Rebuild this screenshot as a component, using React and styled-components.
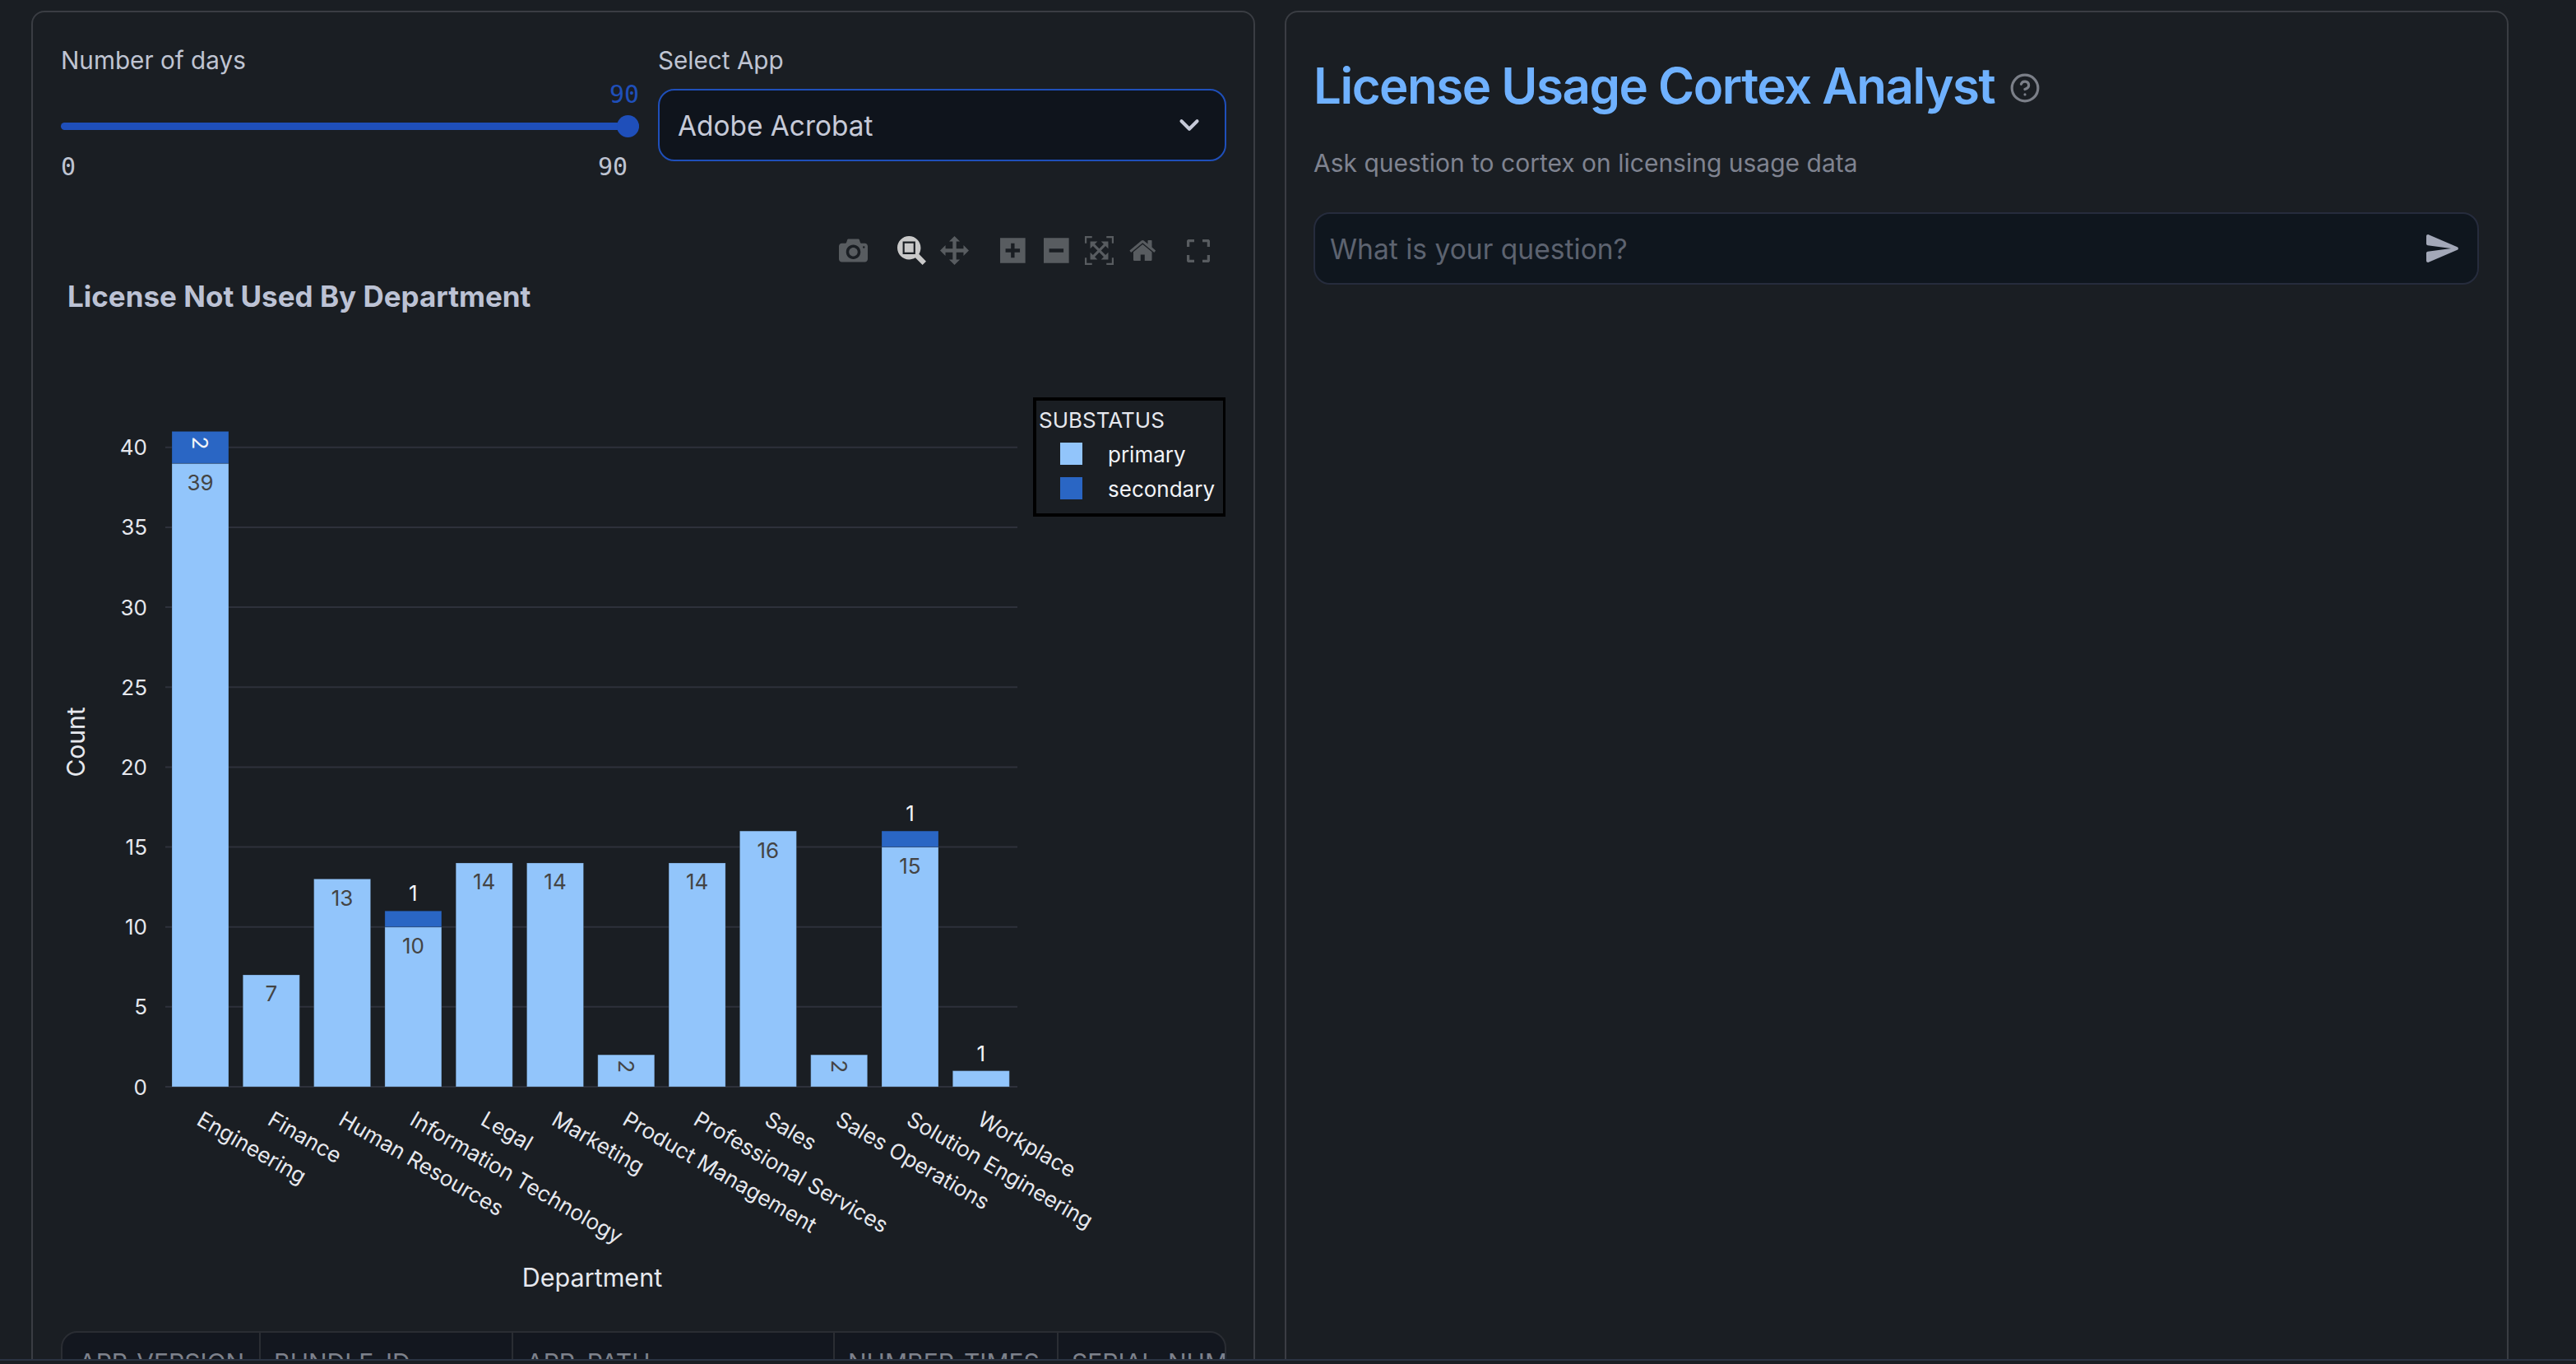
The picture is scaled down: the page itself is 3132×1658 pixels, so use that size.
import React from 'react';
import styled, { createGlobalStyle } from 'styled-components';
import { ChevronDown, CircleHelp } from 'lucide-react';

const departments = [
  { name: 'Engineering', primary: 39, secondary: 2 },
  { name: 'Finance', primary: 7 },
  { name: 'Human Resources', primary: 13 },
  { name: 'Information Technology', primary: 10, secondary: 1 },
  { name: 'Legal', primary: 14 },
  { name: 'Marketing', primary: 14 },
  { name: 'Product Management', primary: 2 },
  { name: 'Professional Services', primary: 14 },
  { name: 'Sales', primary: 16 },
  { name: 'Sales Operations', primary: 2 },
  { name: 'Solution Engineering', primary: 15, secondary: 1 },
  { name: 'Workplace', primary: 1 },
];

const columns = [
  { label: 'APP_VERSION', width: 241 },
  { label: 'BUNDLE_ID', width: 307 },
  { label: 'APP_PATH', width: 391 },
  { label: 'NUMBER_TIMES', width: 272 },
  { label: 'SERIAL_NUMBER', width: 260 },
];

const modeIcons = [
  {
    name: 'camera',
    width: 1000,
    gap: 36,
    d: 'm500 450c-83 0-150-67-150-150 0-83 67-150 150-150 83 0 150 67 150 150 0 83-67 150-150 150z m400 150h-120c-16 0-34 13-39 29l-31 93c-6 15-23 28-40 28h-340c-16 0-34-13-39-28l-31-94c-6-15-23-28-40-28h-120c-55 0-100-45-100-100v-450c0-55 45-100 100-100h800c55 0 100 45 100 100v450c0 55-45 100-100 100z m-400-550c-138 0-250 112-250 250 0 138 112 250 250 250 138 0 250-112 250-250 0-138-112-250-250-250z m365 380c-19 0-35 16-35 35 0 19 16 35 35 35 19 0 35-16 35-35 0-19-16-35-35-35z',
  },
  {
    name: 'zoom',
    width: 1000,
    gap: 17,
    active: true,
    d: 'm1000-25l-250 251c40 63 63 138 63 218 0 224-182 406-407 406-224 0-406-182-406-406s183-406 407-406c80 0 155 22 218 62l250-250 125 125z m-812 250l0 438 437 0 0-438-437 0z m62 375l313 0 0-312-313 0 0 312z',
  },
  {
    name: 'pan',
    width: 1000,
    gap: 38,
    d: 'm1000 350l-187 188 0-125-250 0 0 250 125 0-188 187-187-187 125 0 0-250-250 0 0 125-188-188 186-187 0 125 252 0 0-250-125 0 187-188 188 188-125 0 0 250 250 0 0-126 187 188z',
  },
  {
    name: 'plus',
    width: 875,
    gap: 22,
    d: 'm1 787l0-875 875 0 0 875-875 0z m687-500l-187 0 0-187-125 0 0 187-188 0 0 125 188 0 0 187 125 0 0-187 187 0 0-125z',
  },
  {
    name: 'minus',
    width: 875,
    gap: 19,
    d: 'm0 788l0-876 875 0 0 876-875 0z m688-500l-500 0 0 125 500 0 0-125z',
  },
  {
    name: 'autoscale',
    width: 1000,
    gap: 19,
    d: 'm250 850l-187 0-63 0 0-62 0-188 63 0 0 188 187 0 0 62z m688 0l-188 0 0-62 188 0 0-188 62 0 0 188 0 62-62 0z m-875-938l0 188-63 0 0-188 0-62 63 0 187 0 0 62-187 0z m875 188l0-188-188 0 0-62 188 0 62 0 0 62 0 188-62 0z m-125 188l-1 0-93-94-156 156 156 156 92-93 2 0 0 250-250 0 0-2 93-92-156-156-156 156 94 92 0 2-250 0 0-250 0 0 93 93 157-156-157-156-93 94 0 0 0-250 250 0 0 0-94 93 156 157 156-157-93-93 0 0 250 0 0 250z',
  },
  {
    name: 'home',
    width: 928.6,
    gap: 38,
    d: 'm786 296v-267q0-15-11-26t-25-10h-214v214h-143v-214h-214q-15 0-25 10t-11 26v267q0 1 0 2t0 2l321 264 321-264q1-1 1-4z m124 39l-34-41q-5-5-12-6h-2q-7 0-12 3l-386 322-386-322q-7-4-13-4-7 2-12 7l-35 41q-4 5-3 13t6 12l401 334q18 15 42 15t43-15l136-114v109q0 8 5 13t13 5h107q8 0 13-5t5-13v-227l122-102q5-5 6-12t-4-13z',
  },
];

const zeroY = 1321;
const unitY = 19.43;
const barLeft = 209;
const barStep = 86.3;
const barWidth = 69;

function BarLabel({ x, y, value, dark }) {
  const rotated = value === 2;
  return (
    <ChartText
      x={x}
      y={y}
      $size={26}
      $color={dark ? '#444444' : '#f2f4f8'}
      textAnchor="middle"
      dominantBaseline="central"
      transform={rotated ? `rotate(90 ${x} ${y})` : undefined}
    >
      {value}
    </ChartText>
  );
}

function DepartmentBar({ item, index }) {
  const { name, primary, secondary } = item;
  const x = barLeft + index * barStep;
  const cx = x + barWidth / 2;
  const primaryTop = zeroY - primary * unitY;
  const secondaryTop = secondary ? primaryTop - secondary * unitY : 0;
  const primaryLabelY =
    primary === 1 ? primaryTop - 21 : primaryTop + (primary === 2 ? 14 : 23);
  const labelX = x + barWidth / 2 - 6;

  return (
    <g>
      <BarRect x={x} y={primaryTop} width={barWidth} height={primary * unitY} fill="#92c5fb" />
      <BarLabel x={cx} y={primaryLabelY} value={primary} dark={primary !== 1} />
      {secondary && (
        <>
          <BarRect x={x} y={secondaryTop} width={barWidth} height={secondary * unitY} fill="#2a66c4" />
          <BarLabel
            x={cx}
            y={secondary === 1 ? secondaryTop - 22 : secondaryTop + 14}
            value={secondary}
          />
        </>
      )}
      <ChartText
        x={labelX}
        y={1366}
        $size={26.2}
        $color="#e6e8ee"
        transform={`rotate(30 ${labelX} 1366)`}
      >
        {name}
      </ChartText>
    </g>
  );
}

function LicenseChart() {
  const ticks = [0, 5, 10, 15, 20, 25, 30, 35, 40];
  return (
    <ChartSvg viewBox="74 270 1416 1340">
      <ChartText x={82} y={373} $size={35} $weight={700} $color="#bcc2d4">
        License Not Used By Department
      </ChartText>
      {ticks.map((tick) => (
        <g key={tick}>
          <line x1={201} x2={1237} y1={zeroY - tick * unitY} y2={zeroY - tick * unitY} stroke="#2e313b" strokeWidth="2" />
          <ChartText x={179} y={zeroY - tick * unitY} $size={26} $color="#e6e8ee" textAnchor="end" dominantBaseline="central">
            {tick}
          </ChartText>
        </g>
      ))}
      {departments.map((item, index) => (
        <DepartmentBar key={item.name} item={item} index={index} />
      ))}
      <ChartText x={92} y={902} $size={30} $color="#e6e8ee" textAnchor="middle" dominantBaseline="central" transform="rotate(-90 92 902)">
        Count
      </ChartText>
      <ChartText x={720} y={1552} $size={30.5} $color="#e6e8ee" textAnchor="middle" dominantBaseline="central">
        Department
      </ChartText>

      <rect x={1258} y={485} width={231} height={141} fill="#1a1e23" stroke="#000000" strokeWidth="4" />
      <ChartText x={1263} y={510} $size={26} $color="#e6e8ee" dominantBaseline="central">
        SUBSTATUS
      </ChartText>
      <rect x={1289} y={538} width={27} height={27} fill="#92c5fb" />
      <ChartText x={1347} y={552} $size={26} $color="#f2f4f8" dominantBaseline="central">
        primary
      </ChartText>
      <rect x={1289} y={580} width={27} height={27} fill="#2a66c4" />
      <ChartText x={1347} y={594} $size={26} $color="#f2f4f8" dominantBaseline="central">
        secondary
      </ChartText>
    </ChartSvg>
  );
}

function ModeBar() {
  return (
    <ModeBarWrap>
      {modeIcons.map((icon) => (
        <ModeIcon
          key={icon.name}
          $gap={icon.gap}
          $active={icon.active}
          viewBox={`0 0 ${icon.width} 1000`}
        >
          <g transform="matrix(1 0 0 -1 0 850)">
            <path d={icon.d} />
          </g>
        </ModeIcon>
      ))}
      <FullscreenIcon viewBox="0 0 28 28">
        <path d="M1.5 9V3a1.500 1.500 0 0 1 1.500-1.500H9M19 1.500h6A1.500 1.500 0 0 1 26.500 3v6M26.500 19v6a1.500 1.500 0 0 1-1.500 1.500h-6M9 26.500H3A1.500 1.500 0 0 1 1.500 25v-6" />
      </FullscreenIcon>
    </ModeBarWrap>
  );
}

export default function App() {
  return (
    <>
      <GlobalStyle />
      <Page>
        <Panels>
          <LeftPanel>
            <Controls>
              <div>
                <FieldLabel>Number of days</FieldLabel>
                <SliderValue>90</SliderValue>
                <SliderTrack>
                  <SliderThumb />
                </SliderTrack>
                <SliderRange>
                  <span>0</span>
                  <span>90</span>
                </SliderRange>
              </div>
              <div>
                <FieldLabel>Select App</FieldLabel>
                <SelectBox>
                  <SelectValue>Adobe Acrobat</SelectValue>
                  <ChevronDown size={38} strokeWidth={2.6} color="#c6cad8" />
                </SelectBox>
              </div>
            </Controls>
            <ChartBox>
              <ModeBar />
              <LicenseChart />
            </ChartBox>
            <DataTable>
              {columns.map((col, index) => (
                <HeaderCell key={col.label} $width={col.width} $first={index === 0}>
                  {col.label}
                </HeaderCell>
              ))}
            </DataTable>
          </LeftPanel>
          <RightPanel>
            <TitleRow>
              <Title>License Usage Cortex Analyst</Title>
              <HelpIcon size={38} strokeWidth={2} color="#7b7f88" />
            </TitleRow>
            <Subtitle>Ask question to cortex on licensing usage data</Subtitle>
            <QuestionBox>
              <Placeholder>What is your question?</Placeholder>
              <SendIcon viewBox="0 0 24 24">
                <path d="M3.400 20.400 20.850 12.920c.81-.35.81-1.490 0-1.840L3.400 3.600c-.66-.29-1.390.2-1.390.91L2 9.120c0 .5.37.93.87.99L17 12 2.870 13.880c-.5.07-.87.5-.87 1l.01 4.610c0 .71.73 1.200 1.390.91z" />
              </SendIcon>
            </QuestionBox>
          </RightPanel>
        </Panels>
        <BottomRule />
      </Page>
    </>
  );
}

const GlobalStyle = createGlobalStyle`
  html, body {
    margin: 0;
    padding: 0;
    background: #1a1e23;
    overflow: hidden;
  }
  * {
    box-sizing: border-box;
  }
`;

const Page = styled.div`
  height: 1658px;
  padding-bottom: 4px;
  overflow: hidden;
  display: flex;
  flex-direction: column;
  background: #1a1e23;
  font-family: Inter, 'Liberation Sans', sans-serif;
`;

const Panels = styled.main`
  flex: 1;
  min-height: 0;
  overflow: hidden;
  display: grid;
  grid-template-columns: 1488px 1488px;
  column-gap: 36px;
  padding: 13px 0 0 38px;
`;

const BottomRule = styled.div`
  height: 2px;
  background: #2a3342;
`;

const LeftPanel = styled.section`
  height: 1800px;
  border: 2px solid #3a3d43;
  border-radius: 16px;
  padding: 42px 33px 0 34px;
`;

const RightPanel = styled(LeftPanel)`
  padding: 51px 34px 0 33px;
`;

const Controls = styled.div`
  display: grid;
  grid-template-columns: 703px 691px;
  column-gap: 23px;
  height: 166px;
`;

const FieldLabel = styled.div`
  font-size: 29.7px;
  line-height: 32px;
  color: #bfc4d2;
`;

const SliderValue = styled.div`
  margin-top: 8px;
  font-family: 'DejaVu Sans Mono', 'Liberation Mono', monospace;
  font-size: 30px;
  line-height: 36px;
  text-align: right;
  color: #1f4fba;
`;

const SliderTrack = styled.div`
  position: relative;
  height: 9px;
  margin: 16px 0 27px;
  background: #1f4fba;
  border-radius: 5px;
`;

const SliderThumb = styled.div`
  position: absolute;
  right: 0;
  top: -9px;
  width: 27px;
  height: 27px;
  border-radius: 50%;
  background: #1f4fba;
`;

const SliderRange = styled.div`
  display: flex;
  justify-content: space-between;
  padding-right: 14px;
  font-family: 'DejaVu Sans Mono', 'Liberation Mono', monospace;
  font-size: 30px;
  line-height: 36px;
  color: #bfc4d2;
`;

const SelectBox = styled.div`
  height: 88px;
  margin-top: 19px;
  display: flex;
  align-items: center;
  justify-content: space-between;
  padding: 0 24px 0 22px;
  background: #0f141c;
  border: 2px solid #1f4fba;
  border-radius: 20px;
  color: #c6cad8;
`;

const SelectValue = styled.span`
  padding-top: 2px;
  font-size: 33.4px;
`;

const ChartBox = styled.div`
  position: relative;
  margin-top: 47px;
`;

const ChartSvg = styled.svg`
  display: block;
  width: 1416px;
  height: 1340px;
`;

const ChartText = styled.text`
  font-family: Inter, 'Liberation Sans', sans-serif;
  font-size: ${(props) => props.$size}px;
  font-weight: ${(props) => props.$weight || 400};
  fill: ${(props) => props.$color};
`;

const BarRect = styled.rect`
  stroke: #1a1e23;
  stroke-opacity: 0.25;
  stroke-width: 1;
`;

const ModeBarWrap = styled.div`
  position: absolute;
  top: 17px;
  right: 20px;
  display: flex;
  align-items: center;
`;

const ModeIcon = styled.svg`
  width: auto;
  height: 35px;
  margin-right: ${(props) => props.$gap}px;
  fill: ${(props) => (props.$active ? '#c9c9c9' : '#585c60')};
`;

const FullscreenIcon = styled.svg`
  width: 28px;
  height: 28px;
  fill: none;
  stroke: #585c60;
  stroke-width: 3.5;
`;

const DataTable = styled.div`
  display: flex;
  width: 1417px;
  height: 120px;
  margin-top: 8px;
  overflow: hidden;
  background: #13171f;
  border: 2px solid #2a2d33;
  border-radius: 20px 20px 0 0;
`;

const HeaderCell = styled.div`
  flex: none;
  width: ${(props) => props.$width}px;
  padding: 18px 0 0 ${(props) => (props.$first ? 20 : 16)}px;
  border-right: 2px solid #2a2d33;
  font-size: 30px;
  line-height: 36px;
  white-space: nowrap;
  overflow: hidden;
  color: #7d818b;
`;

const TitleRow = styled.div`
  display: flex;
  align-items: center;
  gap: 18px;
  height: 76px;
`;

const Title = styled.h1`
  margin: 0;
  font-size: 60px;
  line-height: 76px;
  font-weight: 600;
  letter-spacing: -1.5px;
  color: #6fb1ff;
`;

const HelpIcon = styled(CircleHelp)`
  margin-top: 6px;
`;

const Subtitle = styled.p`
  margin: 40px 0 0;
  font-size: 30px;
  line-height: 32px;
  color: #7f8390;
`;

const QuestionBox = styled.div`
  height: 88px;
  margin-top: 44px;
  display: flex;
  align-items: center;
  justify-content: space-between;
  padding: 0 18px;
  background: #0f161e;
  border: 2px solid #262c3d;
  border-radius: 20px;
`;

const Placeholder = styled.span`
  font-size: 33.6px;
  color: #5d6370;
`;

const SendIcon = styled.svg`
  width: 48px;
  height: 48px;
  fill: #a3a8b8;
`;
